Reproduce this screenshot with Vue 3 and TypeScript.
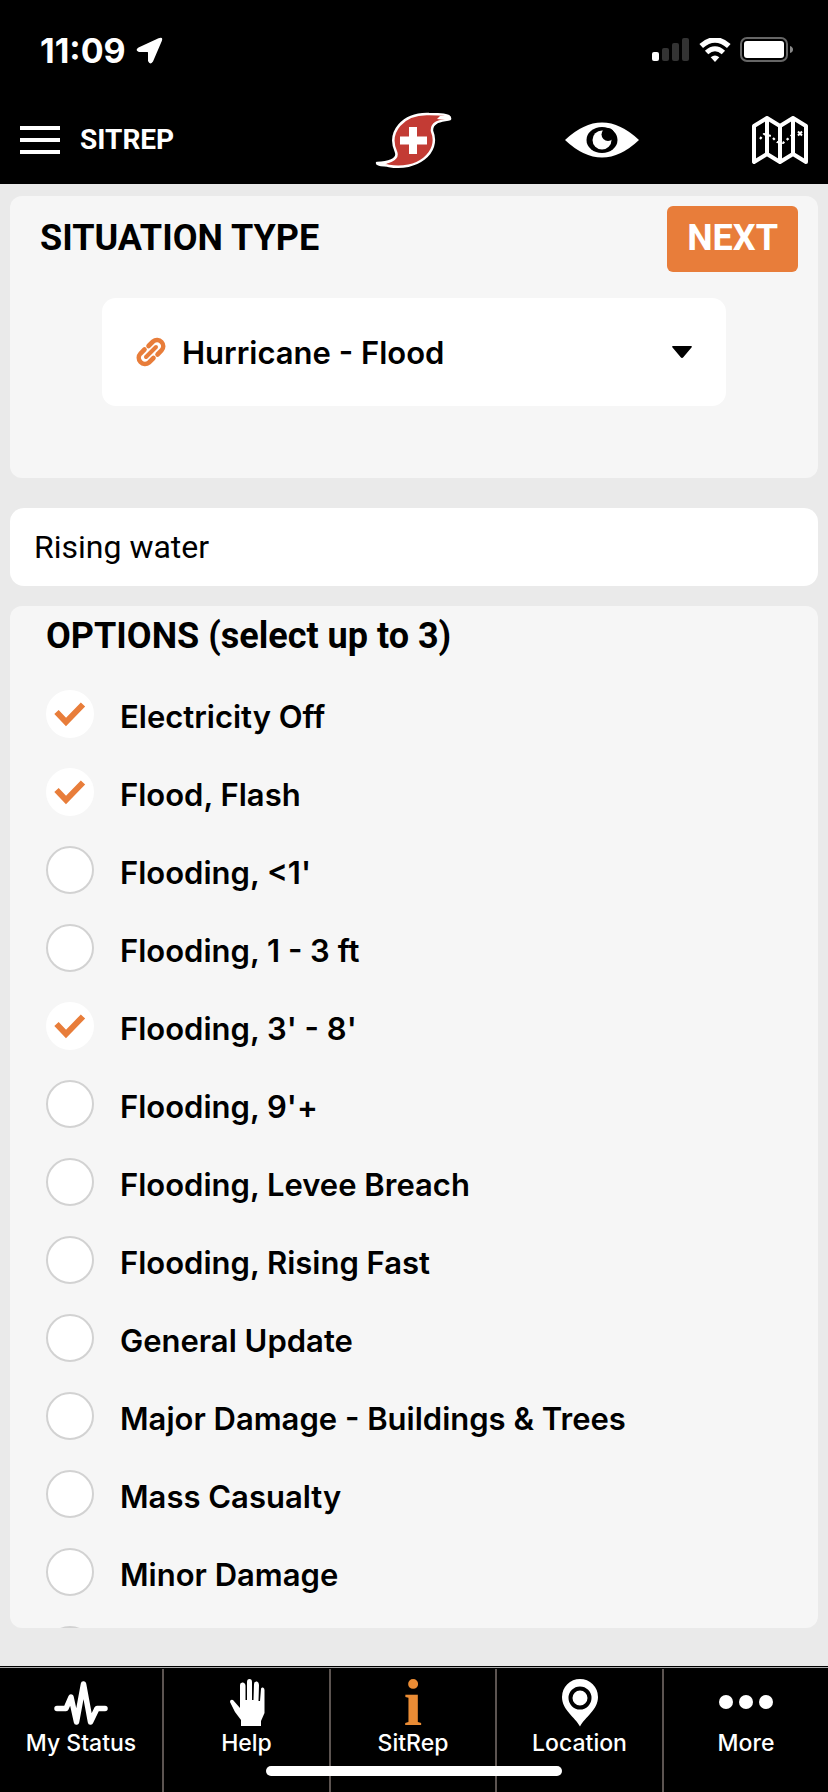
<script setup lang="ts">
import { ref } from 'vue'

interface Option {
  id: string
  label: string
}

const situations = ['Hurricane - Flood', 'Hurricane - Wind', 'Tornado', 'Wildfire']
const situation = ref(situations[0])
const note = ref('Rising water')
const maxSelected = 3

const options: Option[] = [
  { id: 'electricity-off', label: 'Electricity Off' },
  { id: 'flood-flash', label: 'Flood, Flash' },
  { id: 'flooding-1', label: "Flooding, <1'" },
  { id: 'flooding-1-3', label: 'Flooding, 1 - 3 ft' },
  { id: 'flooding-3-8', label: "Flooding, 3' - 8'" },
  { id: 'flooding-9', label: "Flooding, 9'+" },
  { id: 'levee-breach', label: 'Flooding, Levee Breach' },
  { id: 'rising-fast', label: 'Flooding, Rising Fast' },
  { id: 'general-update', label: 'General Update' },
  { id: 'major-damage', label: 'Major Damage - Buildings & Trees' },
  { id: 'mass-casualty', label: 'Mass Casualty' },
  { id: 'minor-damage', label: 'Minor Damage' },
  { id: 'other', label: 'Other' },
]
const selected = ref<string[]>(['electricity-off', 'flood-flash', 'flooding-3-8'])

const tabs = [
  { id: 'status', label: 'My Status' },
  { id: 'help', label: 'Help' },
  { id: 'sitrep', label: 'SitRep' },
  { id: 'location', label: 'Location' },
  { id: 'more', label: 'More' },
]
const activeTab = ref('sitrep')

function isLocked(id: string): boolean {
  return selected.value.length >= maxSelected && !selected.value.includes(id)
}
</script>

<template>
  <div class="app">
    <header class="top">
      <div class="status">
        <div class="clock">
          <span>11:09</span>
          <svg class="arrow" viewBox="0 0 27 27" aria-hidden="true">
            <path d="M2.500 10.500 22.500 1.200Q27.500-.500 25.800 4L17 24.500Q14 28.500 12 24V15.500Q12 15 11.500 15H3Q-1.500 13.500 2.500 10.500Z" fill="#fff" />
          </svg>
        </div>
        <div class="signals">
          <svg width="38" height="24" viewBox="0 0 38 24" aria-hidden="true">
            <rect x="0" y="14" width="7" height="9" rx="2" fill="#fff" />
            <rect x="10" y="10" width="7" height="13" rx="2" fill="#333" />
            <rect x="20" y="5" width="7" height="18" rx="2" fill="#333" />
            <rect x="30" y="0" width="7" height="23" rx="2" fill="#333" />
          </svg>
          <svg width="32" height="24" viewBox="0 0 32 24" aria-hidden="true">
            <path d="M2.200 8Q16-4 29.800 8" fill="none" stroke="#fff" stroke-width="5.500" />
            <path d="M7.600 14.500Q16 7 24.400 14.500" fill="none" stroke="#fff" stroke-width="5" />
            <path d="M11.700 19.300Q16 15.500 20.300 19.300L16 24Z" fill="#fff" />
          </svg>
          <svg width="54" height="26" viewBox="0 0 54 26" aria-hidden="true">
            <rect x="1" y="1" width="46" height="23" rx="6" fill="none" stroke="#666" stroke-width="2" />
            <rect x="4" y="4" width="40" height="17" rx="3" fill="#fff" />
            <path d="M50 9Q53 10 53 12.500T50 16Z" fill="#888" />
          </svg>
        </div>
      </div>

      <div class="bar">
        <div class="brand">
          <button class="icon-btn" type="button" aria-label="Menu">
            <svg width="40" height="28" viewBox="0 0 40 28" aria-hidden="true">
              <path d="M0 2H40M0 14H40M0 26H40" stroke="#fff" stroke-width="4" />
            </svg>
          </button>
          <h1>SITREP</h1>
        </div>
        <svg class="logo" width="78" height="58" viewBox="0 0 78 58" aria-hidden="true">
          <path d="M2 52C12 52 24 49 21 41C12 21 28 2 54 3C64 3 76 3 75 8C70 10 56 9 57 20C66 42 41 60 14 55C8 54 2 54 2 52Z" fill="#c33b34" stroke="#fff" stroke-width="2.500" stroke-linejoin="round" />
          <path d="M65 5Q77 3 75 8 70 9 62 8ZM2 52Q7 51 14 51L8 55Z" fill="#fff" />
          <path d="M38 16V43M25 29.500H52" stroke="#fff" stroke-width="8" />
        </svg>
        <button class="icon-btn" type="button" aria-label="View">
          <svg width="74" height="36" viewBox="0 0 74 36" aria-hidden="true">
            <path d="M0 18Q37-17 74 18 37 53 0 18Z" fill="#fff" />
            <ellipse cx="37" cy="18" rx="15.500" ry="13" />
            <circle cx="37" cy="18" r="9.500" fill="#fff" />
            <circle cx="43" cy="12.500" r="6.500" />
          </svg>
        </button>
        <button class="icon-btn" type="button" aria-label="Map">
          <svg width="56" height="48" viewBox="0 0 56 48" fill="none" stroke="#fff" stroke-linejoin="round" aria-hidden="true">
            <path d="M2 10 15 2 28 10 41 2 54 10V46L41 38 28 46 15 38 2 46Z" stroke-width="4" />
            <path d="M15 3V38M28 11V45M41 3V38" stroke-width="4" />
            <path d="M8 23 12 18 19 20 25 26 31 27 37 22 41 18" stroke-width="2.200" stroke-dasharray="2.500 3" />
            <path d="M46 15.500 50 19.500M50 15.500 46 19.500" stroke-width="2" />
          </svg>
        </button>
      </div>
    </header>

    <main>
      <section class="card situation">
        <div class="heading">
          <h2 id="situation-title">SITUATION TYPE</h2>
          <button class="next" type="button">NEXT</button>
        </div>
        <div class="picker">
          <svg class="link" width="30" height="30" viewBox="0 0 30 30" fill="none" stroke="#e87d3a" stroke-linecap="round" aria-hidden="true">
            <path d="M12.500 9 17 4.500A6.200 6.200 0 0 1 25.500 13.500L21.500 17.500M17.500 21 13 25.500A6.200 6.200 0 0 1 4.500 16.500L8.500 12.500" stroke-width="4.600" />
            <path d="M10 20 20 10" stroke-width="4" />
          </svg>
          <select v-model="situation" aria-labelledby="situation-title">
            <option v-for="item in situations" :key="item">{{ item }}</option>
          </select>
          <svg class="caret" width="20" height="12" viewBox="0 0 20 12" aria-hidden="true">
            <path d="M1 0H19Q20.500 0 19.500 1.500L11.500 11Q10 12.800 8.500 11L.500 1.500Q-.500 0 1 0Z" />
          </svg>
        </div>
      </section>

      <input v-model="note" class="note" type="text" aria-label="Description" />

      <fieldset class="card options">
        <h2>OPTIONS (select up to 3)</h2>
        <label v-for="option in options" :key="option.id" class="option">
          <span class="tick">
            <input v-model="selected" type="checkbox" :value="option.id" :disabled="isLocked(option.id)" />
            <svg width="32" height="26" viewBox="0 0 32 26" aria-hidden="true">
              <path d="M2.500 11 12 21 29 3.500" fill="none" stroke="#e87d3a" stroke-width="6" />
            </svg>
          </span>
          <span class="text">{{ option.label }}</span>
        </label>
      </fieldset>
    </main>

    <nav class="tabs">
      <button v-for="tab in tabs" :key="tab.id" type="button" class="tab" :aria-current="tab.id === activeTab ? 'page' : undefined" @click="activeTab = tab.id">
        <span class="glyph" aria-hidden="true">
          <svg v-if="tab.id === 'status'" width="54" height="48" viewBox="0 0 54 48">
            <path d="M3 29.500H12L17 18 22.500 43 29.500 5 36.500 43 43 29.500H51" fill="none" stroke="#fff" stroke-width="5.500" stroke-linecap="round" stroke-linejoin="round" />
          </svg>
          <svg v-else-if="tab.id === 'help'" width="36" height="48" viewBox="0 0 36 48">
            <path d="M12 47V41L6 33 1 23Q1 20 4 21L11 29V6Q11 3 14 3.500 16.500 4 16.500 7V21H18V3Q18 0 20.500 0T23 3V21H24.500L25 5Q25 2 28 2.500 30 3 30 6L29.500 22H31L32 10Q32 8 34 8.500 35.500 9 35.500 11V34L32 42V47Z" fill="#fff" />
          </svg>
          <span v-else-if="tab.id === 'sitrep'" class="info">i</span>
          <svg v-else-if="tab.id === 'location'" width="38" height="48" viewBox="0 0 38 48">
            <path d="M19 47.500C14 38 1 31 1 18A18 18 0 0 1 37 18C37 31 24 38 19 47.500Z" fill="#fff" />
            <circle cx="19" cy="19" r="9.500" fill="#fff" stroke="#000" stroke-width="4" />
          </svg>
          <svg v-else width="54" height="48" viewBox="0 0 54 48" fill="#fff">
            <circle cx="7" cy="23" r="7" />
            <circle cx="27" cy="23" r="7" />
            <circle cx="47" cy="23" r="7" />
          </svg>
        </span>
        <span class="name">{{ tab.label }}</span>
      </button>
      <span class="home" aria-hidden="true"></span>
    </nav>
  </div>
</template>

<style>
body {
  background: #eaeaea;
}
</style>

<style scoped>
.app {
  display: flex;
  flex-direction: column;
  height: 100vh;
  font-family: Inter, sans-serif;
  color: #000;
  background: #eaeaea;
}

.app *,
.app {
  box-sizing: border-box;
}

button,
input,
select {
  font-family: inherit;
}

button {
  padding: 0;
  border: 0;
  cursor: pointer;
}

h1,
h2 {
  margin: 0;
  font-family: Roboto, sans-serif;
  font-weight: 700;
}

svg {
  display: block;
  flex: none;
}

.top {
  flex: none;
  color: #fff;
  background: #000;
}

.status {
  display: flex;
  align-items: center;
  justify-content: space-between;
  height: 100px;
  padding: 0 34px 0 40px;
}

.clock {
  display: flex;
  align-items: center;
  gap: 10px;
  font-size: 34px;
  font-weight: 700;
}

.arrow {
  width: 27px;
  height: 27px;
}

.signals {
  display: flex;
  align-items: center;
  gap: 9px;
}

.bar {
  display: flex;
  align-items: center;
  justify-content: space-between;
  height: 84px;
  padding: 0 20px 4px;
}

.brand {
  display: flex;
  align-items: center;
  gap: 20px;
}

.brand h1 {
  font-size: 28px;
  line-height: 32px;
}

.logo {
  margin-left: 88px;
}

.icon-btn {
  display: block;
  background: none;
}

main {
  display: flex;
  flex: 1;
  flex-direction: column;
  min-height: 0;
  padding: 12px 10px 38px;
}

.card {
  background: #f6f6f6;
  border-radius: 12px;
}

.card h2 {
  font-size: 36px;
  line-height: 40px;
}

.situation {
  flex: none;
  padding: 10px 20px 72px 30px;
}

.heading {
  display: flex;
  align-items: flex-start;
  justify-content: space-between;
}

.heading h2 {
  padding-top: 12px;
}

.next {
  height: 66px;
  padding: 0 20px 2px;
  font-family: Roboto, sans-serif;
  font-size: 36px;
  font-weight: 700;
  color: #fff;
  background: #e87d3a;
  border-radius: 6px;
}

.picker {
  display: grid;
  grid-template-columns: 34px 30px 1fr 20px 34px;
  align-items: center;
  height: 108px;
  margin: 26px 72px 0 62px;
  background: #fff;
  border-radius: 14px;
}

.picker > * {
  grid-row: 1;
}

.picker select {
  grid-column: 1 / -1;
  width: 100%;
  height: 100%;
  padding: 0 64px 0 80px;
  font-size: 31px;
  font-weight: 600;
  color: #000;
  appearance: none;
  background: transparent;
  border: 0;
  border-radius: 14px;
}

.link {
  grid-column: 2;
}

.caret {
  grid-column: 4;
  pointer-events: none;
}

.note {
  flex: none;
  width: 100%;
  height: 78px;
  margin: 30px 0 20px;
  padding: 0 24px;
  font-family: Roboto, sans-serif;
  font-size: 32px;
  color: #000;
  background: #fff;
  border: 0;
  border-radius: 14px;
}

.options {
  flex: 1;
  min-width: 0;
  min-height: 0;
  margin: 0;
  padding: 10px 36px 0;
  overflow-y: auto;
  scrollbar-width: none;
  border: 0;
}

.options h2 {
  margin-bottom: 19px;
}

.option {
  display: flex;
  align-items: center;
  gap: 26px;
  height: 78px;
}

.tick {
  display: grid;
  flex: none;
  place-items: center;
}

.tick > * {
  grid-area: 1 / 1;
}

.tick input {
  width: 48px;
  height: 48px;
  margin: 0;
  appearance: none;
  background: #fff;
  border: 2px solid #d2d2d2;
  border-radius: 50%;
}

.tick input:checked {
  border-color: #fff;
}

.tick svg {
  visibility: hidden;
  pointer-events: none;
}

.tick input:checked + svg {
  visibility: visible;
}

.text {
  padding-top: 4px;
  font-size: 31px;
  font-weight: 600;
}

.tabs {
  position: relative;
  display: grid;
  flex: none;
  grid-template-columns: 164fr 167fr 166fr 167fr 164fr;
  height: 126px;
  padding-top: 3px;
  background: linear-gradient(#000 1px, #aaa 1px, #aaa 2px, #000 2px);
}

.tab {
  display: flex;
  flex-direction: column;
  align-items: center;
  padding-top: 10px;
  color: #fff;
  background: none;
  border-right: 2px solid #5c5451;
}

.tab:nth-child(5) {
  border-right: 0;
}

.glyph {
  display: flex;
  align-items: center;
  justify-content: center;
  height: 48px;
}

.info {
  font-family: "Liberation Serif", serif;
  font-size: 66px;
  font-weight: 700;
  line-height: 50px;
  color: #ea8c35;
}

.name {
  font-size: 23px;
  font-weight: 500;
  line-height: 32px;
}

.home {
  position: absolute;
  bottom: 16px;
  left: 50%;
  width: 296px;
  height: 10px;
  background: #fff;
  border-radius: 5px;
  transform: translateX(-50%);
}
</style>
